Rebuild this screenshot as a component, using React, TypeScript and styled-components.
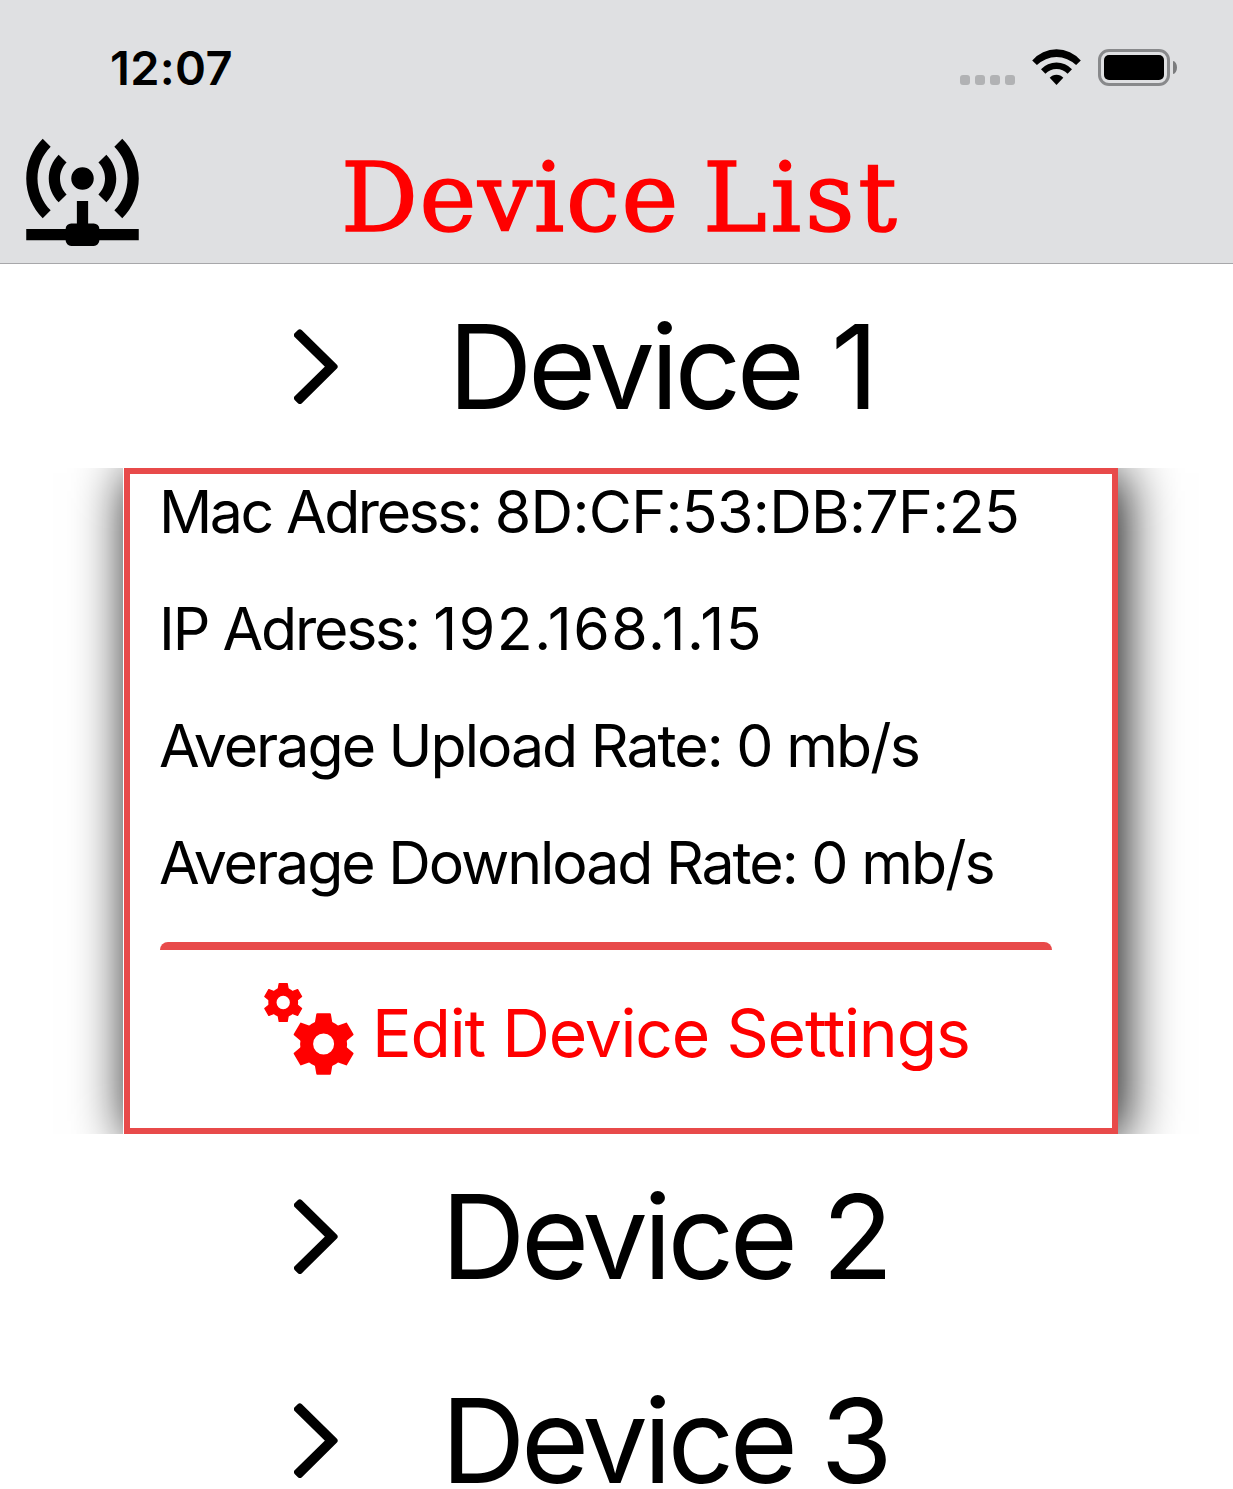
import React from "react";
import styled, { createGlobalStyle } from "styled-components";

const RED = "#ff0000";
const CORAL = "#e84a4a";

const GlobalStyle = createGlobalStyle`
  html, body { margin: 0; padding: 0; background: #fff; overflow: hidden; }
  *, *::before, *::after { box-sizing: border-box; }
`;

const Screen = styled.main`
  width: 1233px;
  height: 1489px;
  overflow: hidden;
  background: #fff;
  color: #000;
  font-family: Inter, "Liberation Sans", sans-serif;
  white-space: nowrap;
`;

const Header = styled.header`
  height: 264px;
  background: #dfe0e2;
  border-bottom: 1px solid #a7a7aa;
`;

const StatusBar = styled.div`
  display: flex;
  align-items: flex-start;
  justify-content: space-between;
  height: 122px;
  padding: 49px 56px 0 110px;
`;

const Clock = styled.time`
  font-size: 47px;
  line-height: 38px;
  font-weight: 600;
  letter-spacing: 0.3px;
`;

const StatusIcons = styled.div`
  display: flex;
  align-items: flex-start;
`;

const SignalDots = styled.div`
  display: flex;
  gap: 5px;
  margin: 26px 17px 0 0;
`;

const Dot = styled.span`
  width: 10px;
  height: 10px;
  border-radius: 3px;
  background: #b1b2b4;
`;

const Battery = styled.div`
  width: 72px;
  height: 37px;
  margin-left: 17px;
  padding: 3px;
  border: 3px solid #88898b;
  border-radius: 11px;
`;

const Charge = styled.div`
  height: 25px;
  border-radius: 5px;
  background: #000;
`;

const BatteryNub = styled.div`
  width: 4px;
  height: 13px;
  margin: 12px 0 0 3px;
  border-radius: 0 4px 4px 0 / 0 6.5px 6.5px 0;
  background: #7b7c7e;
`;

const NavBar = styled.div`
  display: flex;
  height: 141px;
  padding-left: 15px;
`;

const Title = styled.h1`
  margin: 0;
  padding: 16px 0 0 191px;
  font-family: "DejaVu Serif", serif;
  font-size: 96px;
  line-height: 120px;
  font-weight: 400;
  word-spacing: -7.5px;
  color: ${RED};
  -webkit-text-stroke: 1.6px ${RED};
  stroke-linejoin: round;
`;

const Word = styled.span<{ $spacing: number }>`
  letter-spacing: ${(p) => p.$spacing}px;
`;

const DeviceRow = styled.button`
  display: flex;
  align-items: center;
  width: 100%;
  height: 204px;
  margin: 0;
  padding: 0 0 0 294px;
  border: 0;
  background: none;
  font: inherit;
  color: inherit;
`;

const DeviceName = styled.span<{ $gap: number; $wordGap: number }>`
  margin-left: ${(p) => p.$gap}px;
  padding-top: 2px;
  font-size: 117px;
  line-height: 94px;
  letter-spacing: -4.5px;
  word-spacing: ${(p) => p.$wordGap}px;
`;

const PanelClip = styled.section`
  height: 666px;
  padding: 0 115px 0 124px;
  overflow: hidden;
`;

const Panel = styled.div`
  display: flex;
  flex-direction: column;
  height: 666px;
  padding: 0 60px 0 30px;
  border: 6px solid ${CORAL};
  background: #fff;
  box-shadow: -1px 0 0 #fff, 5px 5px 51px rgba(0, 0, 0, 0.98);
`;

const InfoLine = styled.p`
  height: 117px;
  margin: 0 0 0 -1px;
  font-size: 59px;
  line-height: 75px;
`;

const Divider = styled.div`
  width: 892px;
  height: 8px;
  border-radius: 9px 9px 0 0;
  background: ${CORAL};
`;

const EditButton = styled.button`
  display: flex;
  align-items: flex-start;
  margin: 0;
  padding: 30px 0 0 102px;
  border: 0;
  background: none;
  font: inherit;
  color: ${RED};
`;

const EditLabel = styled.span`
  margin: 10px 0 0 16px;
  font-size: 66px;
  line-height: 86px;
  letter-spacing: -1.2px;
`;

function WifiIcon() {
  return (
    <svg width="49" height="37" viewBox="0 0 49 37">
      <path d="M0.2 11.4A32 32 0 0 1 48.8 11.4L44.1 16.1A28 28 0 0 0 4.9 16.1Z" />
      <path d="M9 20.2A21.3 21.3 0 0 1 40 20.2L35.6 24.8A15.4 15.4 0 0 0 13.4 24.8Z" />
      <path d="M17.7 28.8A9 9 0 0 1 31.3 28.8L24.5 36Z" />
    </svg>
  );
}

function AccessPointIcon() {
  return (
    <svg width="135" height="135" viewBox="0 -0.04 24 24">
      <path d="M4.93 2.93C3.12 4.74 2 7.24 2 10s1.12 5.26 2.93 7.07l1.41-1.41C4.89 14.22 4 12.22 4 10s.89-4.22 2.34-5.66zM19.07 2.93l-1.41 1.41C19.11 5.78 20 7.79 20 10s-.89 4.22-2.34 5.66l1.41 1.41C20.88 15.26 22 12.76 22 10s-1.12-5.26-2.93-7.07zM7.76 5.76C6.67 6.85 6 8.35 6 10s.67 3.15 1.76 4.24l1.41-1.41C8.45 12.11 8 11.11 8 10s.45-2.11 1.17-2.83zM16.24 5.76l-1.41 1.41C15.55 7.89 16 8.89 16 10s-.45 2.11-1.17 2.83l1.41 1.41C17.33 13.15 18 11.65 18 10s-.67-3.15-1.76-4.24zM12 8a2 2 0 1 0 0 4 2 2 0 0 0 0-4zM11 14v4h-1a1 1 0 0 0-1 1H2v2h7a1 1 0 0 0 1 1h4a1 1 0 0 0 1-1h7v-2h-7a1 1 0 0 0-1-1h-1v-4z" />
    </svg>
  );
}

function ChevronIcon() {
  return (
    <svg width="44" height="76" viewBox="0 0 44 76">
      <path
        d="M3 7.2L5.8 4.4L40.6 38.7L5.8 73L3 70.2L35.1 38.7Z"
        stroke="#000"
        strokeWidth="6"
        strokeLinejoin="round"
      />
    </svg>
  );
}

const TEETH = [0, 60, 120, 180, 240, 300];

function Gear({ x, y, scale }: { x: number; y: number; scale: number }) {
  return (
    <g transform={`translate(${x} ${y}) scale(${scale})`} fill={RED} stroke={RED}>
      <circle r="17" strokeWidth="13" fill="none" />
      {TEETH.map((angle) => (
        <path
          key={angle}
          transform={`rotate(${angle})`}
          d="M-6.3 -29.8H6.3L8.3 -18H-8.3Z"
          strokeWidth="2"
          strokeLinejoin="round"
        />
      ))}
    </g>
  );
}

function GearsIcon() {
  return (
    <svg width="94" height="100" viewBox="262 980 94 100">
      <Gear x={283.2} y={1002.5} scale={0.635} />
      <Gear x={323.6} y={1044} scale={1} />
    </svg>
  );
}

const details = [
  { label: "Mac Adress:", labelSpacing: -2.45, value: "8D:CF:53:DB:7F:25", valueSpacing: -0.65 },
  { label: "IP Adress:", labelSpacing: -2.2, value: "192.168.1.15", valueSpacing: 1.5 },
  { label: "Average Upload Rate:", labelSpacing: -2.0, value: "0 mb/s", valueSpacing: -1.9 },
  { label: "Average Download Rate:", labelSpacing: -2.05, value: "0 mb/s", valueSpacing: -1.9 },
];

function Device({ name, gap, wordGap }: { name: string; gap: number; wordGap: number }) {
  return (
    <DeviceRow>
      <ChevronIcon />
      <DeviceName $gap={gap} $wordGap={wordGap}>
        {name}
      </DeviceName>
    </DeviceRow>
  );
}

export default function App() {
  return (
    <Screen>
      <GlobalStyle />
      <Header>
        <StatusBar>
          <Clock>12:07</Clock>
          <StatusIcons>
            <SignalDots>
              <Dot />
              <Dot />
              <Dot />
              <Dot />
            </SignalDots>
            <WifiIcon />
            <Battery>
              <Charge />
            </Battery>
            <BatteryNub />
          </StatusIcons>
        </StatusBar>
        <NavBar>
          <AccessPointIcon />
          <Title>
            <Word $spacing={1.6}>Device</Word> <Word $spacing={3.9}>List</Word>
          </Title>
        </NavBar>
      </Header>

      <Device name="Device 1" gap={110} wordGap={2} />
      <PanelClip>
        <Panel>
          {details.map((line) => (
            <InfoLine key={line.label}>
              <Word $spacing={line.labelSpacing}>{line.label} </Word>
              <Word $spacing={line.valueSpacing}>{line.value}</Word>
            </InfoLine>
          ))}
          <Divider />
          <EditButton>
            <GearsIcon />
            <EditLabel>Edit Device Settings</EditLabel>
          </EditButton>
        </Panel>
      </PanelClip>
      <Device name="Device 2" gap={103} wordGap={0} />
      <Device name="Device 3" gap={103} wordGap={-1.5} />
    </Screen>
  );
}
